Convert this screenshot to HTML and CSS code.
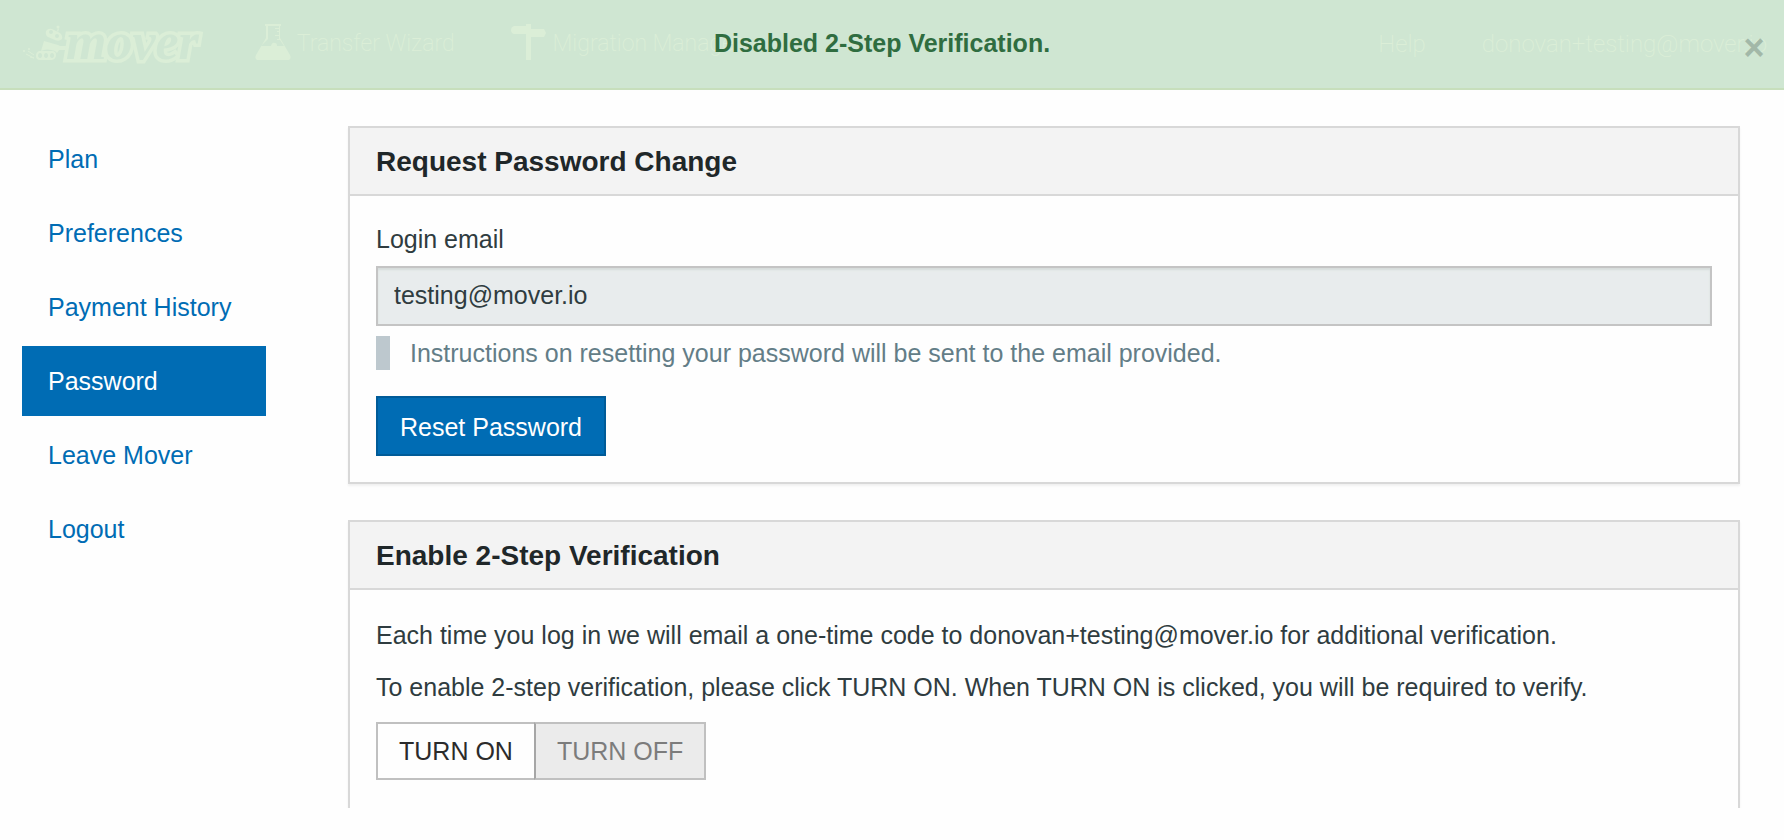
FILE: index.html
```html
<!DOCTYPE html>
<html lang="en">
<head>
<meta charset="utf-8">
<meta name="viewport" content="width=device-width, initial-scale=1">
<title>Mover – Password</title>
<link rel="stylesheet" href="styles.css">
</head>
<body>
<header class="topbar">
  <a class="brand" href="#" aria-label="Mover home">
    <svg class="brand-bot" viewBox="0 0 44 36" width="44" height="36" aria-hidden="true">
      <g fill="currentColor">
        <path d="M24 7q3-4 8-1l6 3q3 3 2 6-3 3-7 1l-7-3q-3-2-2-6z"/>
        <path d="M35 7l1-3 1 1-1 3z"/>
        <circle cx="36" cy="3" r="1.500"/>
        <path d="M22 17l14 4 2 1h6v4h-7l-2 3-2-2q-8-3-14 0z"/>
        <path fill-rule="evenodd" d="M17 27h13q4 0 4 4t-4 5H18q-4 0-4-4t3-5zM18 29a2 2.500 0 1 0 .1 0zM24 29a2 2.500 0 1 0 .1 0zM30 29a2 2.500 0 1 0 .1 0z"/>
        <circle cx="2" cy="27" r="1"/><circle cx="7" cy="25" r="1"/>
      </g>
      <path d="M4 30l8 4M6 27l6 4M8 33l4 1" fill="none" stroke="currentColor"/>
      <g class="cutout"><circle cx="29" cy="8" r="2"/><circle cx="35" cy="12" r="2"/></g>
    </svg>
    <span class="brand-name">mover</span>
  </a>
  <nav class="topnav" aria-label="Main">
    <a class="topnav-link" href="#">
      <svg viewBox="0 0 36 36" width="36" height="36" aria-hidden="true"><path fill="currentColor" fill-rule="evenodd" d="M10 0h16v2h-1v12l10 17q2 5-3 5H4q-5 0-3-5l10-17V2h-1zM13 2v13L6 22h10q1-4 4-3 2 0 2 3h7l-4-6h-3v-1h2v-3h-4v-1h4V8h-2V7h2V5h-4V4h4V2z"/></svg>
      <span>Transfer Wizard</span>
    </a>
    <a class="topnav-link" href="#">
      <svg viewBox="0 0 36 36" width="36" height="36" aria-hidden="true"><path fill="currentColor" d="M15 0h5v5h13l2 4-2 4H20v23h-5V10H3Q0 9 0 6t3-4h12z"/></svg>
      <span>Migration Manager</span>
    </a>
  </nav>
  <nav class="account" aria-label="Account">
    <a class="topnav-link" href="#"><span>Help</span></a>
    <a class="topnav-link" href="#"><span>donovan+testing@mover.io</span></a>
  </nav>
  <div class="alert" role="alert">
    <strong class="alert-text">Disabled 2-Step Verification.</strong>
    <button class="alert-close" type="button" aria-label="Dismiss">×</button>
  </div>
</header>
<div class="page">
  <nav class="sidebar" aria-label="Settings">
    <a href="#">Plan</a>
    <a href="#">Preferences</a>
    <a href="#">Payment History</a>
    <a href="#" class="active" aria-current="page">Password</a>
    <a href="#">Leave Mover</a>
    <a href="#">Logout</a>
  </nav>
  <main class="content">
    <section class="panel">
      <h2 class="panel-title">Request Password Change</h2>
      <form class="panel-body">
        <label class="field-label" for="email">Login email</label>
        <input class="field" id="email" type="email" value="testing@mover.io" readonly>
        <p class="hint">Instructions on resetting your password will be sent to the email provided.</p>
        <button class="button-primary" type="button">Reset Password</button>
      </form>
    </section>
    <section class="panel panel-last">
      <h2 class="panel-title">Enable 2-Step Verification</h2>
      <div class="panel-body">
        <p class="text">Each time you log in we will email a one-time code to donovan+testing@mover.io for additional verification.</p>
        <p class="text">To enable 2-step verification, please click TURN ON. When TURN ON is clicked, you will be required to verify.</p>
        <div class="toggle">
          <button type="button">TURN ON</button>
          <button type="button" disabled>TURN OFF</button>
        </div>
      </div>
    </section>
  </main>
</div>
</body>
</html>
```
FILE: styles.css
```css
* { box-sizing: border-box; }

body {
  margin: 0;
  background: #fefefe;
  color: #2f3c40;
  font: 25px/36px "Liberation Sans", Arial, sans-serif;
}

button, input { font: inherit; border-radius: 0; }
a { text-decoration: none; }

.topbar {
  position: relative;
  display: flex;
  align-items: center;
  height: 90px;
  padding: 0 17px 4px 22px;
  background: #cfe6d2;
  border-bottom: 2px solid #c7dfbc;
  color: #dbeed7;
}
.brand { display: flex; align-items: center; color: inherit; }
.cutout { fill: #cfe6d2; }
.brand-name {
  font: italic 700 52px/44px "Liberation Serif", serif;
  color: #cfe6d2;
  -webkit-text-stroke: 7px #dbeed7;
  paint-order: stroke fill;
}
.topnav { display: flex; gap: 56px; margin-left: 56px; }
.account { display: flex; gap: 56px; margin-left: auto; }
.topnav-link {
  display: flex;
  align-items: center;
  gap: 6px;
  color: inherit;
  white-space: nowrap;
  font-family: Roboto, sans-serif;
  font-size: 23px;
  font-weight: 200;
}
.topnav-link span { padding-top: 3px; }
.account .topnav-link { font-size: 24px; }

.alert {
  position: absolute;
  inset: 0;
  display: flex;
  align-items: center;
  justify-content: center;
  padding: 0 20px 2px 0;
  color: #2f6d40;
}
.alert-close {
  position: absolute;
  right: 16px;
  top: 24px;
  padding: 0;
  width: 28px;
  border: 0;
  background: none;
  color: #a2b8a8;
  font-size: 36px;
  font-weight: 700;
  line-height: 48px;
}

.page { display: flex; gap: 82px; padding: 36px 44px 0 22px; }
.sidebar { flex: 0 0 244px; display: flex; flex-direction: column; gap: 4px; margin-top: -2px; }
.sidebar a { padding: 17px 26px; color: #006cb4; }
.sidebar .active { background: #006cb4; color: #fff; }

.content { flex: 1; min-width: 0; display: grid; gap: 36px; }
.panel { border: 2px solid #d8d8d8; background: #fefefe; box-shadow: 0 2px 2px #f1f1f1; }
.panel-last { border-bottom: 0; }
.panel-title {
  margin: 0;
  padding: 17px 26px 15px;
  background: #f3f3f3;
  border-bottom: 2px solid #d8d8d8;
  color: #1f2729;
  font-size: 28px;
  font-weight: 700;
  line-height: 34px;
}
.panel-body { padding: 26px; }
.panel-last .panel-body { padding-bottom: 28px; }
.field-label { display: block; margin-bottom: 10px; line-height: 34px; }
.field {
  display: block;
  width: 100%;
  height: 60px;
  padding: 0 16px 2px;
  border: 2px solid #c4c4c4;
  background: #e8eced;
  box-shadow: inset 0 2px 2px #d6dcdb;
  color: inherit;
}
.hint {
  margin: 10px 0 26px;
  padding-left: 20px;
  border-left: 14px solid #bdc8ce;
  color: #637d87;
  line-height: 34px;
}
.button-primary {
  height: 60px;
  padding: 2px 22px 0;
  border: 2px solid #005b98;
  background: #006cb4;
  color: #fff;
}
.text { margin: 0 0 14px; line-height: 38px; }
.toggle { display: flex; margin-top: 16px; }
.toggle button {
  height: 58px;
  padding: 0 21px;
  border: 2px solid #c0c0c0;
  background: #fefefe;
  color: #2b2b2b;
}
.toggle button:disabled { margin-left: -2px; border-left-color: #a6a6a6; background: #ebebeb; color: #7c7c7c; }
```
